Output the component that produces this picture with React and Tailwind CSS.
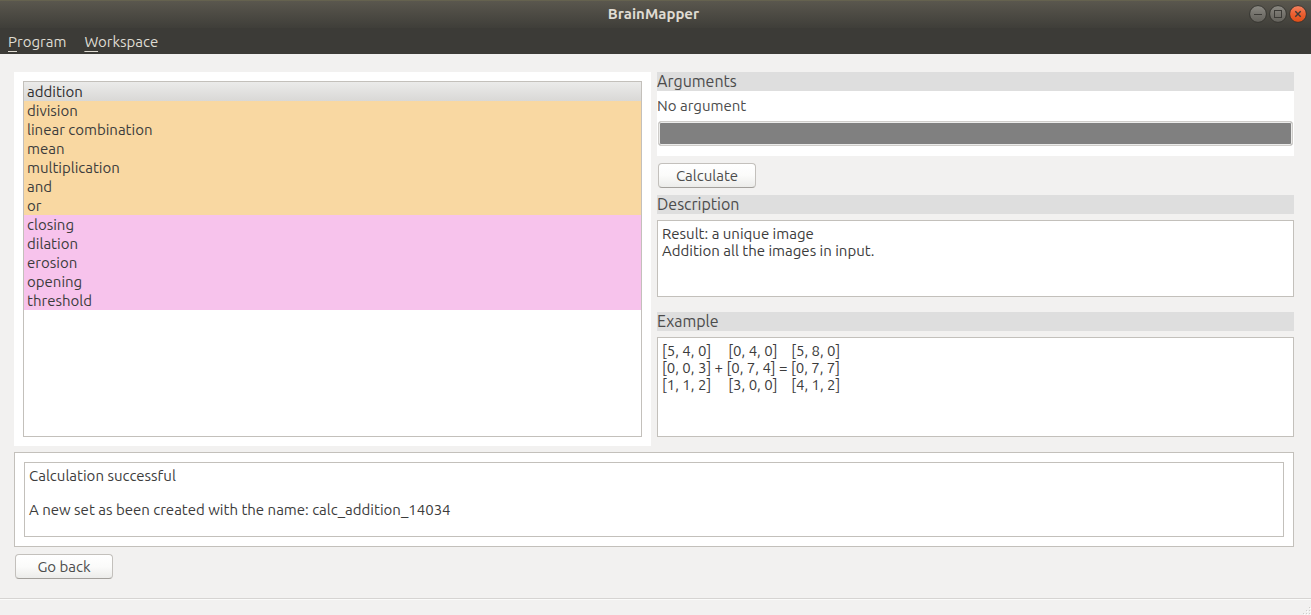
import { useState } from "react";

const operations = [
  { name: "addition", kind: "arithmetic" },
  { name: "division", kind: "arithmetic" },
  { name: "linear combination", kind: "arithmetic" },
  { name: "mean", kind: "arithmetic" },
  { name: "multiplication", kind: "arithmetic" },
  { name: "and", kind: "arithmetic" },
  { name: "or", kind: "arithmetic" },
  { name: "closing", kind: "morphology" },
  { name: "dilation", kind: "morphology" },
  { name: "erosion", kind: "morphology" },
  { name: "opening", kind: "morphology" },
  { name: "threshold", kind: "morphology" },
];

const rowColours = {
  arithmetic: "bg-[#f9d8a2]",
  morphology: "bg-[#f7c3ec]",
};

const description = "Result: a unique image\nAddition all the images in input.";
const example =
  "[5, 4, 0]     [0, 4, 0]    [5, 8, 0]\n[0, 0, 3] + [0, 7, 4] = [0, 7, 7]\n[1, 1, 2]     [3, 0, 0]    [4, 1, 2]";
const log =
  "Calculation successful\n\nA new set as been created with the name: calc_addition_14034";

function WindowButton({ label, close, children }) {
  return (
    <button type="button" aria-label={label} className="block size-[18px]">
      <svg viewBox="0 0 18 18" className="size-[18px]" fill="none">
        <defs>
          <linearGradient id={"face-" + label} x1="0" y1="0" x2="0" y2="1">
            <stop offset="0" stopColor={close ? "#f58462" : "#8d8b84"} />
            <stop offset="0.5" stopColor={close ? "#ec5f31" : "#75736d"} />
            <stop offset="1" stopColor={close ? "#df4d16" : "#63615b"} />
          </linearGradient>
        </defs>
        <circle cx="9" cy="9" r="8.4" fill={"url(#face-" + label + ")"} stroke="#363530" strokeWidth="1" />
        {children}
      </svg>
    </button>
  );
}

function PushButton({ children }) {
  return (
    <button
      type="button"
      className="h-[25px] w-[98px] rounded-[4px] border border-[#c3c0bc] border-b-[#a3a09c] bg-linear-to-b from-white via-[#fbfbfa] to-[#ececea] text-center leading-[22px] text-[#4c4c4c]"
    >
      {children}
    </button>
  );
}

function Heading({ htmlFor, children }) {
  return (
    <h2 className="h-[19px] bg-[#dedede] text-base leading-[19px] text-[#4c4c4c]">
      <label htmlFor={htmlFor}>{children}</label>
    </h2>
  );
}

const textBox =
  "block w-full resize-none border border-[#c3c0bb] bg-white p-1 leading-[17px] text-[#3c3c3c] outline-none";

export default function App() {
  const [selected, setSelected] = useState("addition");

  return (
    <div className="flex min-h-screen flex-col bg-[#f2f1f0] font-['Ubuntu','Noto_Sans',sans-serif] text-[15px] text-[#3c3c3c]">
      <header className="bg-[#3c3b37] text-[#dfdbd2]">
        <div className="grid h-7 grid-cols-[1fr_auto_1fr] items-center border-t border-[#65624f] bg-linear-to-b from-[#5a574e] to-[#3f3e39] pr-1">
          <h1 className="col-start-2 pb-px text-[15px] leading-5 font-bold">BrainMapper</h1>
          <div className="flex justify-end gap-[2px] pb-px">
            <WindowButton label="minimize">
              <path d="M5 9.5h8" stroke="#3c3b37" />
            </WindowButton>
            <WindowButton label="maximize">
              <rect x="5.5" y="5.5" width="7" height="7" stroke="#3c3b37" />
            </WindowButton>
            <WindowButton label="close" close>
              <path d="M6.3 6.3l5.4 5.4M11.7 6.3l-5.4 5.4" stroke="#3c3b37" strokeWidth="1.4" />
            </WindowButton>
          </div>
        </div>
        <nav className="flex h-[26px] gap-[18px] px-2 leading-7">
          <button type="button" className="block leading-7">
            <span className="underline underline-offset-4">P</span>rogram
          </button>
          <button type="button" className="block leading-7">
            <span className="underline underline-offset-4">W</span>orkspace
          </button>
        </nav>
      </header>

      <main className="flex flex-1 flex-col gap-[6px] pt-[18px] pr-[17px] pb-[19px] pl-[14px]">
        <div className="grid flex-1 grid-cols-2 gap-[6px]">
          <section className="flex flex-col bg-white p-[9px]">
            <ul className="flex-1 border border-[#c3c0bb]">
              {operations.map((op) => (
                <li key={op.name}>
                  <button
                    type="button"
                    aria-pressed={selected === op.name}
                    onClick={() => setSelected(op.name)}
                    className={
                      "block h-[19px] w-full px-[3px] text-left leading-[19px] " +
                      (selected === op.name
                        ? "bg-linear-to-b from-[#ebebea] to-[#d9d8d6] text-[#2e2e2e]"
                        : rowColours[op.kind])
                    }
                  >
                    {op.name}
                  </button>
                </li>
              ))}
            </ul>
          </section>

          <section className="flex flex-col pb-[9px]">
            <Heading htmlFor="argument">Arguments</Heading>
            <div className="bg-white pb-[10px]">
              <label htmlFor="argument" className="block h-[30px] leading-[30px] text-[#4c4c4c]">
                No argument
              </label>
              <div className="px-px">
                <input
                  id="argument"
                  type="text"
                  disabled
                  className="block h-[25px] w-full rounded-[3px] border border-[#cfcdca] bg-[#808080] ring-1 ring-[#ebebea] ring-inset"
                />
              </div>
            </div>
            <div className="px-px py-[7px]">
              <PushButton>Calculate</PushButton>
            </div>
            <Heading htmlFor="description">Description</Heading>
            <textarea id="description" readOnly value={description} className={textBox + " mt-[6px] mb-[15px] h-[77px]"} />
            <Heading htmlFor="example">Example</Heading>
            <textarea id="example" readOnly value={example} className={textBox + " mt-[6px] min-h-[100px] flex-1"} />
          </section>
        </div>

        <section className="border border-[#c3c0bb] bg-white p-[9px]">
          <textarea aria-label="Log" readOnly value={log} className={textBox + " h-[75px]"} />
        </section>

        <div className="px-px pt-px">
          <PushButton>Go back</PushButton>
        </div>
      </main>

      <footer className="flex h-[17px] items-end justify-end border-t border-[#d6d4d2] shadow-[inset_0_1px_0_#fbfbfa]">
        <svg viewBox="0 0 8 8" className="size-2" fill="#d0cecb">
          <path d="M6 0h1v1h-1zM3 3h1v1h-1zM6 3h1v1h-1zM0 6h1v1h-1zM3 6h1v1h-1zM6 6h1v1h-1z" />
          <path fill="#fff" d="M7 1h1v1h-1zM4 4h1v1h-1zM7 4h1v1h-1zM1 7h1v1h-1zM4 7h1v1h-1zM7 7h1v1h-1z" />
        </svg>
      </footer>
    </div>
  );
}
